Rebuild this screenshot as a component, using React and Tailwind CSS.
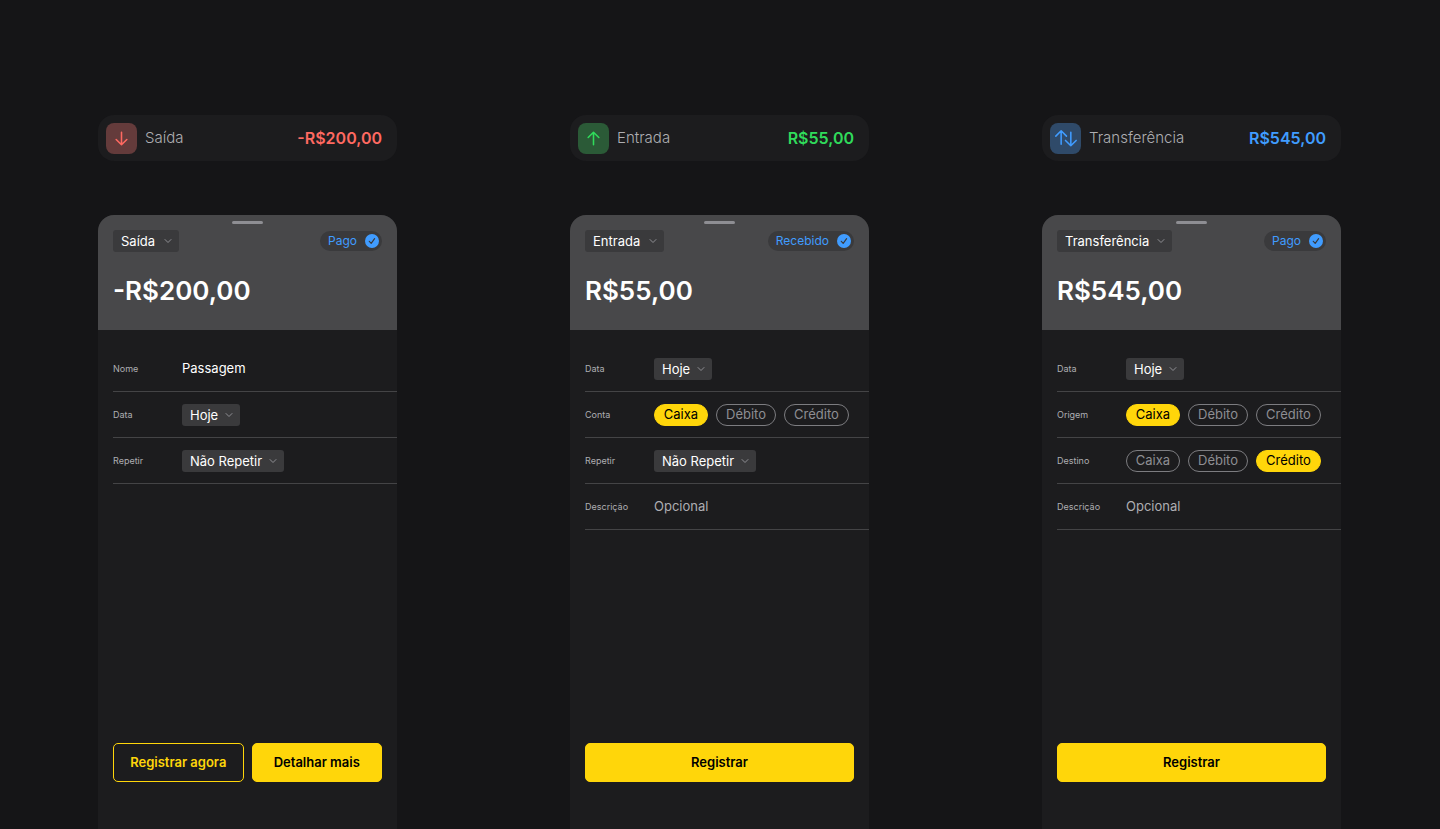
const accounts = [
  { name: 'Caixa', size: 'w-[54px]' },
  { name: 'Débito', size: 'w-[60px]' },
  { name: 'Crédito', size: 'w-[65px]' },
]

const today = { type: 'select', label: 'Data', value: 'Hoje', options: ['Hoje', 'Ontem'], size: 'w-[58px]' }
const repeat = {
  type: 'select',
  label: 'Repetir',
  value: 'Não Repetir',
  options: ['Não Repetir', 'Mensal'],
  size: 'w-[102px]',
}
const description = { type: 'text', label: 'Descrição', placeholder: 'Opcional' }

const entries = [
  {
    id: 'saida',
    kind: 'Saída',
    kindSize: 'w-[66px]',
    amount: '-R$200,00',
    status: 'Pago',
    tone: 'text-[#ff6961]',
    badge: 'bg-[#643b3b]',
    fields: [{ type: 'text', label: 'Nome', value: 'Passagem' }, today, repeat],
    actions: ['Registrar agora', 'Detalhar mais'],
  },
  {
    id: 'entrada',
    kind: 'Entrada',
    kindSize: 'w-[79px]',
    amount: 'R$55,00',
    status: 'Recebido',
    tone: 'text-[#30db5b]',
    badge: 'bg-[#2b5a37]',
    fields: [today, { type: 'account', label: 'Conta', value: 'Caixa' }, repeat, description],
    actions: ['Registrar'],
  },
  {
    id: 'transferencia',
    kind: 'Transferência',
    kindSize: 'w-[115px]',
    amount: 'R$545,00',
    status: 'Pago',
    tone: 'text-[#409cff]',
    badge: 'bg-[#2f4a69]',
    fields: [
      today,
      { type: 'account', label: 'Origem', value: 'Caixa' },
      { type: 'account', label: 'Destino', value: 'Crédito' },
      description,
    ],
    actions: ['Registrar'],
  },
]

const arrows = {
  saida: 'M16 9.5v13M10.5 17l5.5 5.5 5.5-5.5',
  entrada: 'M16 22.5v-13M10.5 15l5.5-5.5 5.5 5.5',
  transferencia: 'M11.5 22V8M6 13.5L11.5 8l5.5 5.5M21.5 9.5v14M16 18l5.5 5.5L27 18',
}

function Summary({ entry }) {
  return (
    <div className="flex h-[46px] items-center rounded-2xl bg-[#1c1c1e] pr-[15px] pl-2">
      <span className={`h-[31px] w-[31px] rounded-lg ${entry.badge} ${entry.tone}`}>
        <svg viewBox="0 0 32 32" className="h-full w-full" fill="none" stroke="currentColor" strokeWidth="1.6" strokeLinecap="round" strokeLinejoin="round" aria-hidden="true">
          <path d={arrows[entry.id]} />
        </svg>
      </span>
      <span className="ml-2 text-[15px] font-light text-[#aeaeb2]">{entry.kind}</span>
      <span className={`ml-auto text-base font-semibold ${entry.tone}`}>{entry.amount}</span>
    </div>
  )
}

function Picker({ id, label, value, options, size, tone }) {
  return (
    <div className="relative">
      <select
        id={id}
        aria-label={label}
        defaultValue={value}
        className={`block h-[22px] appearance-none rounded-[3px] pl-2 text-[13px] leading-5 text-white ${tone} ${size}`}
      >
        {options.map((option) => (
          <option key={option}>{option}</option>
        ))}
      </select>
      <svg viewBox="0 0 8 8" className="pointer-events-none absolute top-[7px] right-[7px] h-2 w-2 text-[#8e8e93]" fill="none" stroke="currentColor" strokeLinecap="round" strokeLinejoin="round" aria-hidden="true">
        <path d="M1 2.5l3 3 3-3" />
      </svg>
    </div>
  )
}

function Accounts({ name, label, value }) {
  return (
    <div role="radiogroup" aria-label={label} className="flex gap-2">
      {accounts.map((account) => (
        <label
          key={account.name}
          className={`flex h-[22px] items-center justify-center rounded-full border border-[#7c7c80] text-[13px] text-[#8e8e93] has-checked:border-[#ffd60a] has-checked:bg-[#ffd60a] has-checked:text-black ${account.size}`}
        >
          <input type="radio" name={name} defaultChecked={account.name === value} className="sr-only" />
          {account.name}
        </label>
      ))}
    </div>
  )
}

function Field({ field, id }) {
  return (
    <div className="flex h-[46px] items-center border-b border-[#444446]">
      {field.type === 'account' ? (
        <span className="w-[69px] shrink-0 text-[9px] text-[#aeaeb2]">{field.label}</span>
      ) : (
        <label htmlFor={id} className="w-[69px] shrink-0 text-[9px] text-[#aeaeb2]">
          {field.label}
        </label>
      )}
      {field.type === 'text' && (
        <input
          id={id}
          type="text"
          defaultValue={field.value}
          placeholder={field.placeholder}
          className="w-full min-w-0 bg-transparent text-[13px] text-white placeholder:text-[#aeaeb2]"
        />
      )}
      {field.type === 'select' && <Picker id={id} {...field} tone="bg-[#3a3a3c]" />}
      {field.type === 'account' && <Accounts name={id} label={field.label} value={field.value} />}
    </div>
  )
}

function Sheet({ entry }) {
  return (
    <form className="flex grow flex-col rounded-t-2xl bg-[#1c1c1e]">
      <header className="h-[115px] rounded-t-2xl bg-[#48484a] px-[15px] pt-1.5">
        <div className="mx-auto h-[3px] w-[31px] rounded-full bg-[#8e8e93]" />
        <div className="mt-1.5 flex items-center justify-between">
          <Picker
            id={`${entry.id}-tipo`}
            label="Tipo"
            value={entry.kind}
            options={entries.map((item) => item.kind)}
            size={entry.kindSize}
            tone="bg-[#3a3a3c]"
          />
          <label className="flex h-5 items-center gap-2 rounded-full bg-[#3a3a3c] pr-[3px] pl-2 text-xs text-[#409cff]">
            {entry.status}
            <input type="checkbox" defaultChecked className="peer sr-only" />
            <svg viewBox="0 0 14 14" className="h-3.5 w-3.5" fill="none" aria-hidden="true">
              <circle cx="7" cy="7" r="7" fill="#409cff" />
              <path d="M4.3 7.3l1.9 2 3.4-4.6" stroke="#3a3a3c" strokeWidth="1.2" strokeLinecap="round" strokeLinejoin="round" />
            </svg>
          </label>
        </div>
        <h2 className="mt-[21px] text-[26px] leading-9 font-semibold text-white">{entry.amount}</h2>
      </header>
      <div className="pt-4 pl-[15px]">
        {entry.fields.map((field) => (
          <Field key={field.label} field={field} id={`${entry.id}-${field.label}`} />
        ))}
      </div>
      <div className="mt-auto flex gap-2 px-[15px] pb-[47px]">
        {entry.actions.map((action, i) => (
          <button
            key={action}
            type="button"
            className={`h-[39px] flex-1 rounded-[5px] border border-[#ffd60a] text-[13px] font-semibold ${
              i === entry.actions.length - 1 ? 'bg-[#ffd60a] text-black' : 'text-[#ffd60a]'
            }`}
          >
            {action}
          </button>
        ))}
      </div>
    </form>
  )
}

export default function App() {
  return (
    <main className="grid min-h-screen grid-cols-3 gap-[173px] bg-[#151517] pr-[99px] pl-[98px] pt-[115px] font-['Inter',sans-serif]">
      {entries.map((entry) => (
        <section key={entry.id} className="flex flex-col gap-[54px]">
          <Summary entry={entry} />
          <Sheet entry={entry} />
        </section>
      ))}
    </main>
  )
}
